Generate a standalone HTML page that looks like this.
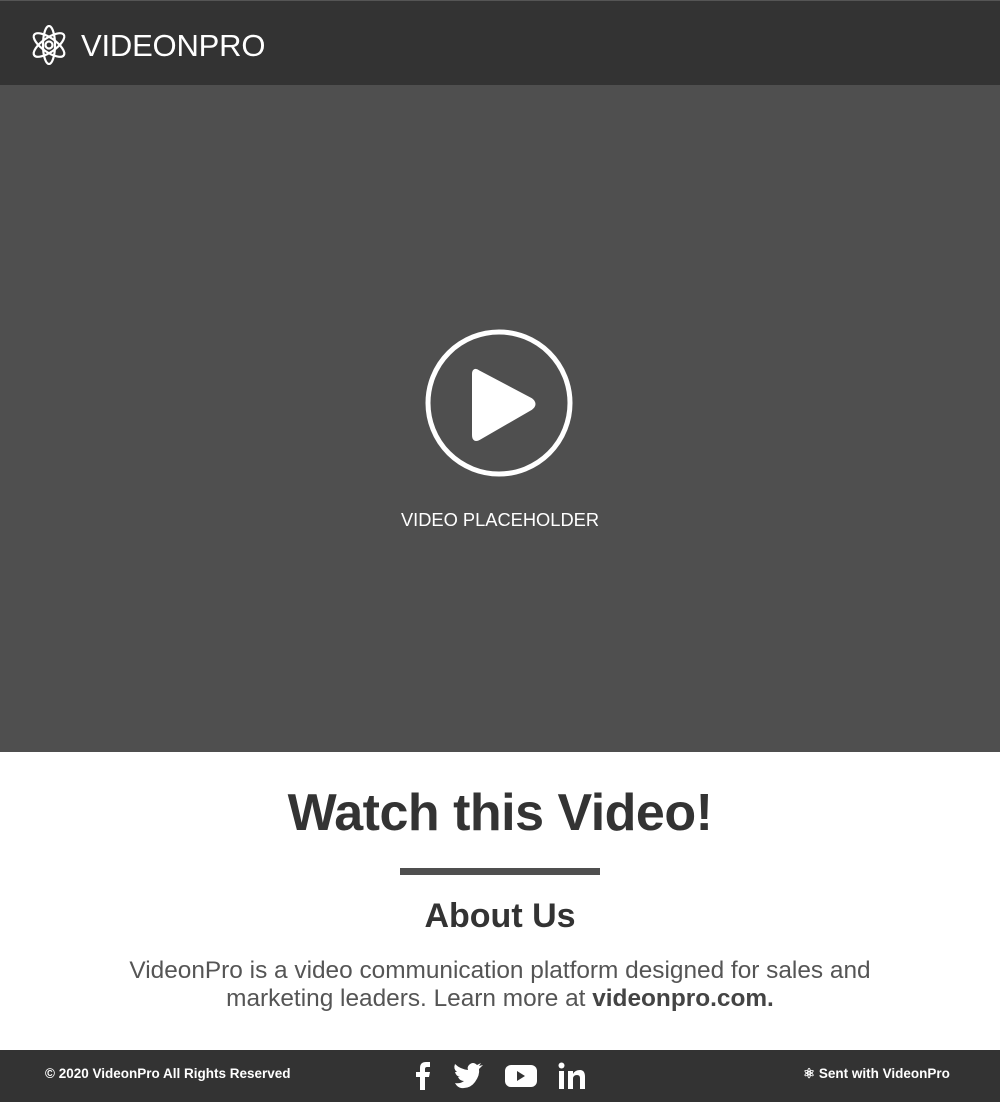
<!DOCTYPE html>
<html><head><meta charset="utf-8"><style>
*{margin:0;padding:0;box-sizing:border-box}
body{width:1000px;height:1102px;overflow:hidden;background:#fff;font-family:"Liberation Sans",sans-serif}
.hdr{position:absolute;left:0;top:0;width:1000px;height:85px;background:#333;border-top:1px solid #555}
.logo{position:absolute;left:81px;top:26px;color:#fff;font-size:31px;letter-spacing:-0.2px;line-height:38px}
.vid{position:absolute;left:0;top:85px;width:1000px;height:667px;background:#4f4f4f}
.ph{position:absolute;left:0;width:1000px;top:509px;text-align:center;color:#fff;font-size:18.3px}
h1{position:absolute;left:0;width:1000px;top:783px;text-align:center;color:#333;font-size:52px;font-weight:bold;letter-spacing:-0.5px}
.bar{position:absolute;left:400px;top:868px;width:200px;height:7px;background:#4f4f4f}
h2{position:absolute;left:0;width:1000px;top:897px;text-align:center;color:#333;font-size:34px;font-weight:bold}
p{position:absolute;left:0;width:1000px;top:957px;text-align:center;color:#555;font-size:24.4px;line-height:28px}
p b{color:#444}
.ft{position:absolute;left:0;top:1050px;width:1000px;height:52px;background:#333;color:#fff;font-size:13.5px;font-weight:bold}
</style></head><body>
<div class="hdr">
<svg style="position:absolute;left:30px;top:24px" width="38" height="40" viewBox="0 0 38 40" fill="none" stroke="#fff" stroke-width="2.2">
<ellipse cx="19" cy="20" rx="18" ry="7" transform="rotate(35 19 20)"/>
<ellipse cx="19" cy="20" rx="18" ry="7" transform="rotate(-35 19 20)"/>
<ellipse cx="19" cy="20" rx="6" ry="19"/>
<circle cx="19" cy="20" r="3.5"/>
</svg>
<div class="logo">VIDEONPRO</div>
</div>
<div class="vid"></div>
<svg style="position:absolute;left:420px;top:325px" width="160" height="160">
<circle cx="79" cy="78" r="71" fill="none" stroke="#fff" stroke-width="5"/>
<path d="M58 47 Q54 44 54 49 L54 110 Q54 116 59 113 L111 83 Q116 79 111 75 Z" fill="#fff" stroke="#fff" stroke-width="4" stroke-linejoin="round"/>
</svg>
<div class="ph">VIDEO PLACEHOLDER</div>
<h1>Watch this Video!</h1>
<div class="bar"></div>
<h2>About Us</h2>
<p>VideonPro is a video communication platform designed for sales and<br>marketing leaders. Learn more at <b>videonpro.com.</b></p>
<div class="ft">
<div style="position:absolute;left:45px;top:16px">© 2020 VideonPro All Rights Reserved</div>
<svg style="position:absolute;left:412px;top:10px" width="180" height="32" fill="#fff">
<path d="M8 30 V17 H4 V12 H8 V8 Q8 2 14 2 H18 V7 H15 Q13 7 13 9 V12 H18 L17 17 H13 V30 Z"/>
<g transform="translate(6 1)"><path d="M43 27 Q52 28 57 21 Q62 14 61 8 L65 4 L61 5 L63 2 L59 4 Q55 0 51 4 Q49 6 50 9 Q42 8 37 3 Q35 8 39 11 L37 11 Q38 15 42 16 L40 16 Q42 20 46 20 Q42 23 37 22 Q39 26 43 27Z"/></g>
<rect x="93" y="5" width="32" height="22" rx="6"/>
<path d="M105 11 L113 16 L105 21Z" fill="#333"/>
<rect x="147" y="11" width="5" height="18"/><circle cx="149.5" cy="5.5" r="3"/>
<path d="M156 11 H161 V14 Q163 10 168 10 Q173 10 173 17 V29 H168 V18 Q168 15 165 15 Q161 15 161 19 V29 H156Z"/>
</svg>
<div style="position:absolute;left:803px;top:16px">⚛ Sent with VideonPro</div>
</div>
</body></html>
